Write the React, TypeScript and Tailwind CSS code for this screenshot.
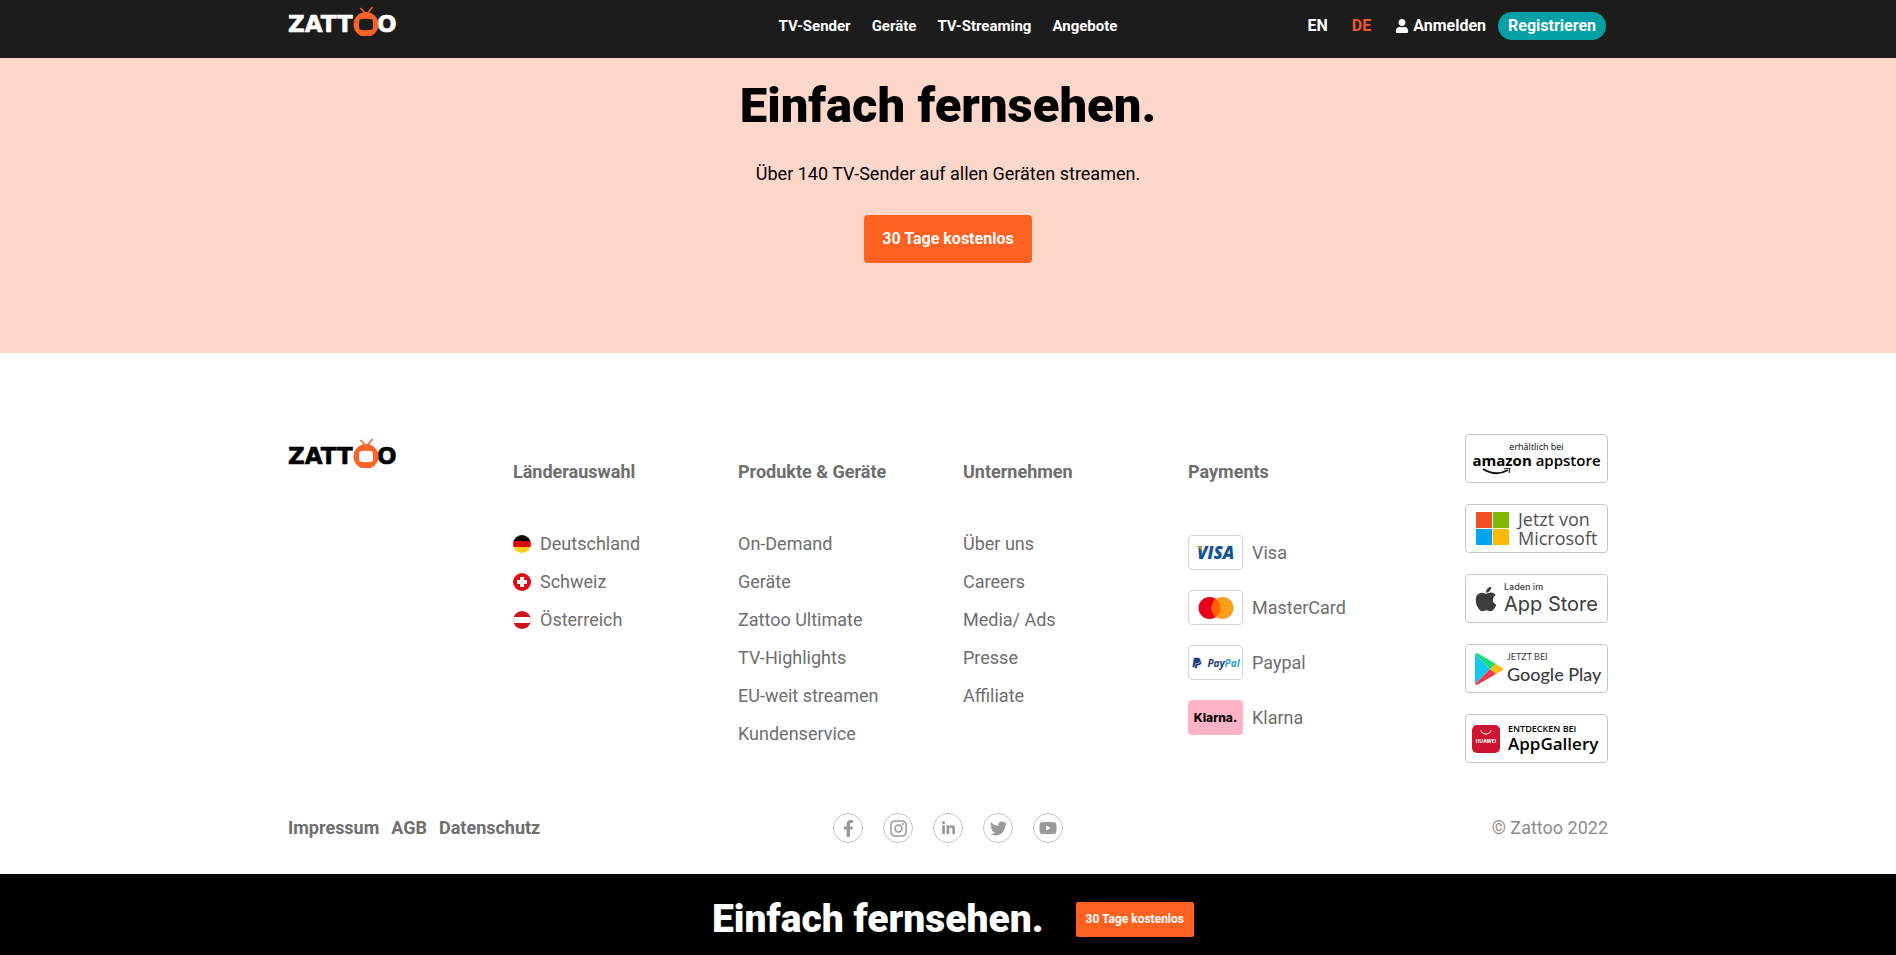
import React from "react";
import {
  FaApple,
  FaFacebookF,
  FaInstagram,
  FaLinkedinIn,
  FaPaypal,
  FaTwitter,
  FaUser,
  FaYoutube,
} from "react-icons/fa";

type LinkColumnProps = {
  title: string;
  links: string[];
};

const navLinks = ["TV-Sender", "Geräte", "TV-Streaming", "Angebote"];

const productLinks = [
  "On-Demand",
  "Geräte",
  "Zattoo Ultimate",
  "TV-Highlights",
  "EU-weit streamen",
  "Kundenservice",
];

const companyLinks = ["Über uns", "Careers", "Media/ Ads", "Presse", "Affiliate"];

const legalLinks = ["Impressum", "AGB", "Datenschutz"];

const socials = [
  { name: "Facebook", icon: <FaFacebookF size={17} /> },
  { name: "Instagram", icon: <FaInstagram size={19} /> },
  { name: "LinkedIn", icon: <FaLinkedinIn size={15} /> },
  { name: "Twitter", icon: <FaTwitter size={17} /> },
  { name: "YouTube", icon: <FaYoutube size={18} /> },
];

const Logo = ({ className }: { className: string }) => (
  <svg width="112" height="30" viewBox="0 0 112 30" className={className} aria-label="Zattoo">
    <g
      fill="currentColor"
      stroke="currentColor"
      strokeWidth="0.600"
      fontFamily="'DejaVu Sans', sans-serif"
      fontWeight="bold"
      fontSize="23"
    >
      <text x="0" y="26">ZATT</text>
      <text x="89" y="26">O</text>
    </g>
    <path d="M78 8 L72.500 2 M79 8 L84.500 1" stroke="#f4642a" strokeWidth="1.500" />
    <circle cx="78" cy="18.500" r="12.500" fill="#f9642a" />
    <path
      d="M71.500 13.500 Q78 12 84.500 13.500 Q85.500 18.500 84.500 23.500 Q78 25 71.500 23.500 Q70.500 18.500 71.500 13.500 Z"
      className="fill-[var(--screen)]"
    />
  </svg>
);

const GermanyFlag = () => (
  <svg width="18" height="18" viewBox="0 0 18 18">
    <clipPath id="de">
      <circle cx="9" cy="9" r="9" />
    </clipPath>
    <g clipPath="url(#de)">
      <rect width="18" height="6" fill="#000" />
      <rect y="6" width="18" height="6" fill="#d80a0a" />
      <rect y="12" width="18" height="6" fill="#ffce1a" />
    </g>
  </svg>
);

const SwissFlag = () => (
  <svg width="18" height="18" viewBox="0 0 18 18">
    <circle cx="9" cy="9" r="9" fill="#e00a12" />
    <path d="M7 4h4v3h3v4h-3v3H7v-3H4V7h3z" fill="#fff" />
  </svg>
);

const AustriaFlag = () => (
  <svg width="18" height="18" viewBox="0 0 18 18">
    <clipPath id="at">
      <circle cx="9" cy="9" r="9" />
    </clipPath>
    <g clipPath="url(#at)">
      <rect width="18" height="18" fill="#d0101a" />
      <rect y="6" width="18" height="6" fill="#fff" />
    </g>
  </svg>
);

const countries = [
  { name: "Deutschland", flag: <GermanyFlag /> },
  { name: "Schweiz", flag: <SwissFlag /> },
  { name: "Österreich", flag: <AustriaFlag /> },
];

const payments = [
  {
    name: "Visa",
    style: "border-gray-300 bg-white",
    logo: (
      <svg width="48" height="30" viewBox="0 0 48 30">
        <text
          x="5"
          y="21"
          fontFamily="'Open Sans', sans-serif"
          fontSize="17"
          fontWeight="800"
          fontStyle="italic"
          fill="#0f5296"
        >
          VISA
        </text>
        <path d="M4 8.500h5l2 6Q9 10 4 8.500z" fill="#eba327" />
      </svg>
    ),
  },
  {
    name: "MasterCard",
    style: "border-gray-300 bg-white",
    logo: (
      <svg width="36" height="24" viewBox="0 0 36 24">
        <circle cx="11.500" cy="12" r="11" fill="#eb001b" />
        <circle cx="24.500" cy="12" r="11" fill="#f79e1b" />
        <path d="M18 3.100a11 11 0 0 1 0 17.800a11 11 0 0 1 0-17.800z" fill="#ff5f00" />
      </svg>
    ),
  },
  {
    name: "Paypal",
    style: "border-gray-300 bg-white",
    logo: (
      <span className="flex items-center gap-1 text-[#223e80]">
        <FaPaypal size={12} />
        <span className="font-['Open_Sans',sans-serif] text-[10px] font-bold italic">
          Pay<span className="text-[#2da5dc]">Pal</span>
        </span>
      </span>
    ),
  },
  {
    name: "Klarna",
    style: "border-[#ffb3c7] bg-[#ffb3c7]",
    logo: <span className="font-[Inter,sans-serif] text-xs font-extrabold text-black">Klarna.</span>,
  },
];

const LinkColumn = ({ title, links }: LinkColumnProps) => (
  <div className="pt-[26px]">
    <h3 className="font-bold">{title}</h3>
    <ul className="mt-12 flex flex-col gap-[14px]">
      {links.map((link) => (
        <li key={link}>
          <a href="#">{link}</a>
        </li>
      ))}
    </ul>
  </div>
);

const StoreBadge = ({ children }: { children: React.ReactNode }) => (
  <a
    href="#"
    className="flex h-[49px] w-[143px] items-center rounded border border-[#c8c8c8] bg-white whitespace-nowrap text-[#3c3c3c]"
  >
    {children}
  </a>
);

const StoreBadges = () => (
  <div className="flex flex-col items-end gap-[21px]">
    <StoreBadge>
      <span className="w-full text-center font-['Open_Sans',sans-serif] text-black">
        <span className="block text-[9px] leading-[10px]">erhältlich bei</span>
        <span className="block text-[15px] leading-4 font-semibold">
          <span className="font-bold">amazon</span> appstore
        </span>
        <svg width="30" height="8" viewBox="0 0 30 8" className="ml-4">
          <path d="M1 1 Q14 9 26 2" fill="none" stroke="#111" strokeWidth="2" />
          <path d="M22 1 L28 0 L27 5" fill="none" stroke="#111" strokeWidth="1" />
        </svg>
      </span>
    </StoreBadge>
    <StoreBadge>
      <svg width="33" height="33" viewBox="0 0 33 33" className="ml-[10px]">
        <rect width="16" height="16" fill="#f25022" />
        <rect x="17" width="16" height="16" fill="#7fba00" />
        <rect y="17" width="16" height="16" fill="#00a4ef" />
        <rect x="17" y="17" width="16" height="16" fill="#ffb900" />
      </svg>
      <span className="ml-[9px] font-['Open_Sans',sans-serif] text-lg leading-[19px] text-[#505050]">
        <span className="block">Jetzt von</span>
        <span className="block">Microsoft</span>
      </span>
    </StoreBadge>
    <StoreBadge>
      <FaApple size={28} className="ml-[6px]" />
      <span className="ml-1 font-[Inter,sans-serif]">
        <span className="block text-[9px] leading-[10px] font-medium">Laden im</span>
        <span className="block text-xl leading-6">App Store</span>
      </span>
    </StoreBadge>
    <StoreBadge>
      <svg width="28" height="32" viewBox="0 0 28 32" className="ml-[9px]">
        <path d="M0 1v30l15-15z" fill="#12c8f5" />
        <path d="M0 1l15 15 6-5L2 0z" fill="#16dc78" />
        <path d="M0 31l15-15 6 5L2 32z" fill="#ee3a4c" />
        <path d="M21 11l7 4v2l-7 4-6-5z" fill="#fdbd10" />
      </svg>
      <span className="ml-1 font-[Lato,sans-serif]">
        <span className="block text-[9px] leading-[10px]">JETZT BEI</span>
        <span className="block text-lg leading-6 font-medium">Google Play</span>
      </span>
    </StoreBadge>
    <StoreBadge>
      <svg width="28" height="28" viewBox="0 0 28 28" className="ml-[6px] shrink-0">
        <rect width="28" height="28" rx="5" fill="#ce1431" />
        <path d="M9 5a5 4 0 0 0 10 0" fill="none" stroke="#fff" strokeWidth="1" />
        <text
          x="14"
          y="18"
          textAnchor="middle"
          fontFamily="Inter, sans-serif"
          fontSize="5"
          fontWeight="bold"
          fill="#fff"
        >
          HUAWEI
        </text>
      </svg>
      <span className="ml-2 font-['Open_Sans',sans-serif] text-black">
        <span className="block text-[9px] leading-[10px] font-semibold">ENTDECKEN BEI</span>
        <span className="block text-[17px] leading-5 font-semibold">AppGallery</span>
      </span>
    </StoreBadge>
  </div>
);

const Header = () => (
  <header className="bg-[#1c1c1c] text-base font-bold text-white">
    <div className="mx-auto grid h-[58px] max-w-[1320px] grid-cols-[1fr_auto_1fr] items-start">
      <a href="#" className="pt-[6px]">
        <Logo className="text-white [--screen:#1c1c1c]" />
      </a>
      <nav className="flex gap-[21px] pt-[14px] text-[15px] leading-6">
        {navLinks.map((link) => (
          <a key={link} href="#">
            {link}
          </a>
        ))}
      </nav>
      <div className="flex items-center justify-end pt-3 pr-[2px]">
        <a href="#" className="mr-6">
          EN
        </a>
        <a href="#" className="mr-6 text-[#f4562c]">
          DE
        </a>
        <a href="#" className="mr-3 flex items-center gap-1">
          <FaUser size={14} />
          Anmelden
        </a>
        <a href="#" className="rounded-full bg-[#00a0a4] px-[10px] py-[2px]">
          Registrieren
        </a>
      </div>
    </div>
  </header>
);

const Footer = () => (
  <footer className="mx-auto max-w-[1320px] pt-[81px] pb-[31px] text-lg leading-6 text-[#6e6e6e]">
    <div className="grid grid-cols-6 gap-x-[30px]">
      <a href="#" className="pt-1">
        <Logo className="text-black [--screen:#ffffff]" />
      </a>
      <div className="pt-[26px]">
        <h3 className="font-bold">Länderauswahl</h3>
        <ul className="mt-12 flex flex-col gap-[14px]">
          {countries.map(({ name, flag }) => (
            <li key={name}>
              <a href="#" className="flex items-center gap-[9px]">
                {flag}
                {name}
              </a>
            </li>
          ))}
        </ul>
      </div>
      <LinkColumn title="Produkte & Geräte" links={productLinks} />
      <LinkColumn title="Unternehmen" links={companyLinks} />
      <div className="pt-[26px]">
        <h3 className="font-bold">Payments</h3>
        <ul className="mt-[51px] flex flex-col gap-5">
          {payments.map(({ name, style, logo }) => (
            <li key={name} className="flex items-center gap-[9px]">
              <span
                className={`flex h-[35px] w-[55px] items-center justify-center rounded border ${style}`}
              >
                {logo}
              </span>
              {name}
            </li>
          ))}
        </ul>
      </div>
      <StoreBadges />
    </div>
    <div className="mt-[50px] grid grid-cols-[1fr_auto_1fr] items-center">
      <div className="flex gap-3 font-bold">
        {legalLinks.map((link) => (
          <a key={link} href="#">
            {link}
          </a>
        ))}
      </div>
      <div className="flex gap-5 text-[#999999]">
        {socials.map(({ name, icon }) => (
          <a
            key={name}
            href="#"
            aria-label={name}
            className="flex h-[30px] w-[30px] items-center justify-center rounded-full border border-[#c4c4c4]"
          >
            {icon}
          </a>
        ))}
      </div>
      <p className="text-right text-[#8c8c8c]">© Zattoo 2022</p>
    </div>
  </footer>
);

const App = () => (
  <div className="bg-white font-[Roboto,sans-serif]">
    <Header />
    <section className="flex flex-col items-center bg-[#fed7cb] pt-[18px] pb-[90px] text-black">
      <h1 className="text-[49px] leading-[60px] font-black">Einfach fernsehen.</h1>
      <p className="mt-[26px] text-lg leading-6">Über 140 TV-Sender auf allen Geräten streamen.</p>
      <button className="mt-[29px] h-12 rounded bg-[#ff6120] px-[18px] text-base font-bold text-white">
        30 Tage kostenlos
      </button>
    </section>
    <Footer />
    <section className="flex items-center justify-center gap-8 bg-black pt-[21px] pb-3 pl-[10px] text-white">
      <h2 className="text-[39px] leading-[48px] font-black">Einfach fernsehen.</h2>
      <button className="h-[35px] rounded-xs bg-[#ff6120] px-[10px] text-xs font-bold">
        30 Tage kostenlos
      </button>
    </section>
  </div>
);

export default App;
